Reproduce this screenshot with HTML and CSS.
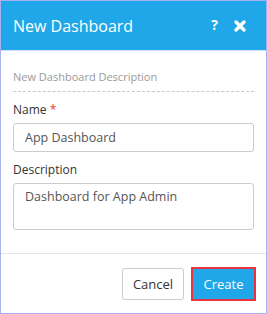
FILE: index.html
```html
<!DOCTYPE html>
<html>
<head>
<meta charset="utf-8">
<link rel="stylesheet" href="styles.css">
</head>
<body>
<div class="dialog">
  <div class="header">
    <span class="title">New Dashboard</span>
    <span class="tools">
      <span class="help">?</span>
      <svg class="close" width="12" height="12" viewBox="0 0 12 12"><path d="M2 2 L10 10 M10 2 L2 10" stroke="#fff" stroke-width="3.2" stroke-linecap="round"/></svg>
    </span>
  </div>
  <div class="body">
    <div class="desc">New Dashboard Description</div>
    <label class="label first">Name <span class="req">*</span></label>
    <div class="input">App Dashboard</div>
    <label class="label">Description</label>
    <div class="textarea">Dashboard for App Admin</div>
  </div>
  <div class="footer">
    <button class="btn cancel">Cancel</button>
    <button class="btn create">Create</button>
  </div>
</div>
</body>
</html>
```
FILE: styles.css
```css
html, body { margin: 0; padding: 0; background: #fff; }
body { font-family: "Open Sans", sans-serif; }
.dialog {
  width: 267px; height: 314px; box-sizing: border-box;
  border: 1px solid #aab1f2;
  display: flex; flex-direction: column;
}
.header {
  background: #1fa7e9; height: 49px;
  display: flex; align-items: center; justify-content: space-between;
  padding: 0 20px 0 12px;
  color: #fff;
  border-bottom: 1px solid #d8dcf7;
}
.title { font-size: 16px; }
.tools { display: flex; align-items: center; gap: 16px; }
.help { font-weight: bold; font-size: 14px; margin-top: -3px; }
.close { display: block; }
.body { padding: 18px 12px 0 12px; flex: 1; border-bottom: 1px solid #e5e5e5; }
.desc {
  font-size: 11px; color: #9a9a9a;
  padding-bottom: 7px;
  border-bottom: 1px dashed #c8c8c8;
}
.label { display: block; font-size: 12px; color: #333; margin-top: 9px; margin-bottom: 5px; }
.label.first { margin-top: 9px; }
.req { color: #e53935; }
.input, .textarea {
  border: 1px solid #ccc; border-radius: 3px;
  font-size: 12.5px; color: #555;
  padding: 0 11px; box-sizing: border-box;
}
.input { height: 29px; line-height: 27px; }
.textarea { height: 47px; padding-top: 4px; line-height: 18px; }
.footer {
  height: 59px; display: flex; align-items: center; justify-content: flex-end;
  padding-right: 10px; gap: 7px;
}
.btn { font-family: "Open Sans", sans-serif; font-size: 13px; border-radius: 3px; cursor: pointer; }
.cancel { background: #fff; border: 1px solid #ccc; color: #333; width: 62px; height: 32px; }
.create { background: #1fa7e9; color: #fff; border: 2px solid #e8343c; width: 65px; height: 34px; border-radius: 0; }
```
